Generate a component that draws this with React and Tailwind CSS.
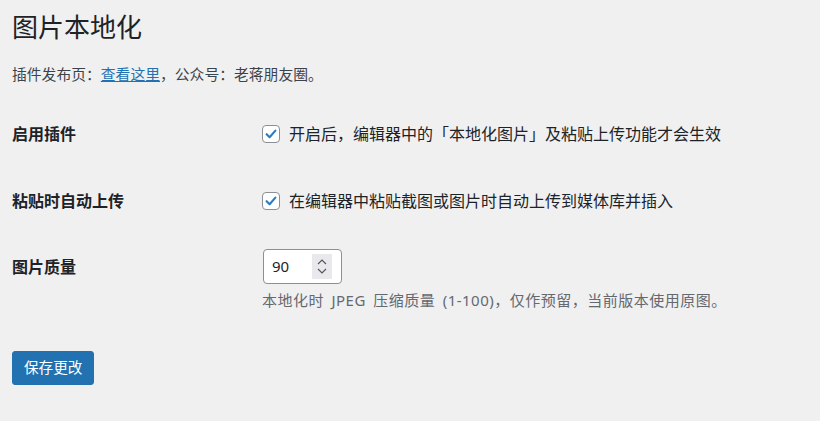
export default function App() {
  const font = { fontFamily: '"Noto Sans", "Noto Sans CJK SC", sans-serif' };
  const Check = () => (
    <span className="w-[18px] h-[18px] shrink-0 rounded-[4px] border border-[#8c8f94] bg-white flex items-center justify-center">
      <svg width="14" height="14" viewBox="0 0 14 14">
        <path d="M2.6 7.2 L5.6 10.2 L11.4 3.6" fill="none" stroke="#2a7bc0" strokeWidth="2.1" strokeLinecap="round" strokeLinejoin="round" />
      </svg>
    </span>
  );
  return (
    <div className="min-h-[421px] w-full bg-[#f0f0f1] text-[#1d2327] px-3 pt-[10px] [text-spacing-trim:space-all]" style={font}>
      <h1 className="text-[26px] leading-[34px] font-normal m-0">图片本地化</h1>
      <p className="mt-[19px] text-[14.8px] leading-[22px] text-[#3c434a]">
        插件发布页：<a href="#" className="text-[#2271b1] underline">查看这里</a>，公众号：老蒋朋友圈。
      </p>
      <div className="mt-[15px]">
        <div className="flex items-center h-[67px]">
          <div className="w-[250px] shrink-0 text-[16px] font-bold">启用插件</div>
          <label className="flex items-center gap-[9px] text-[16px] leading-[22px]">
            <Check />
            <span>开启后，编辑器中的「本地化图片」及粘贴上传功能才会生效</span>
          </label>
        </div>
        <div className="flex items-center h-[67px]">
          <div className="w-[250px] shrink-0 text-[16px] font-bold">粘贴时自动上传</div>
          <label className="flex items-center gap-[9px] text-[16px] leading-[22px]">
            <Check />
            <span>在编辑器中粘贴截图或图片时自动上传到媒体库并插入</span>
          </label>
        </div>
        <div className="flex pt-[15px]">
          <div className="w-[250px] shrink-0 text-[16px] font-bold h-[35px] flex items-center">图片质量</div>
          <div className="flex flex-col">
            <div className="w-[79px] h-[35px] ml-[1px] rounded-[4px] border border-[#8c8f94] bg-white flex items-center pl-[8px] pr-[9px] justify-between">
              <span className="text-[15px]">90</span>
              <span className="w-[20px] h-[25px] bg-[#e9e9ed] flex flex-col items-center justify-center gap-[3px]">
                <svg width="10" height="6" viewBox="0 0 10 6"><path d="M1 5 L5 1 L9 5" fill="none" stroke="#555" strokeWidth="1.1" /></svg>
                <svg width="10" height="6" viewBox="0 0 10 6"><path d="M1 1 L5 5 L9 1" fill="none" stroke="#555" strokeWidth="1.1" /></svg>
              </span>
            </div>
            <p className="mt-[5px] text-[15px] leading-[22px] text-[#646970] tracking-[0.5px] [word-spacing:3px] whitespace-nowrap">
              本地化时 JPEG 压缩质量 (1-100)，仅作预留，当前版本使用原图。
            </p>
          </div>
        </div>
      </div>
      <button className="mt-[40px] h-[34px] px-[11px] rounded-[3px] bg-[#2271b1] text-white text-[14.6px] border border-[#2271b1]">
        保存更改
      </button>
    </div>
  );
}
